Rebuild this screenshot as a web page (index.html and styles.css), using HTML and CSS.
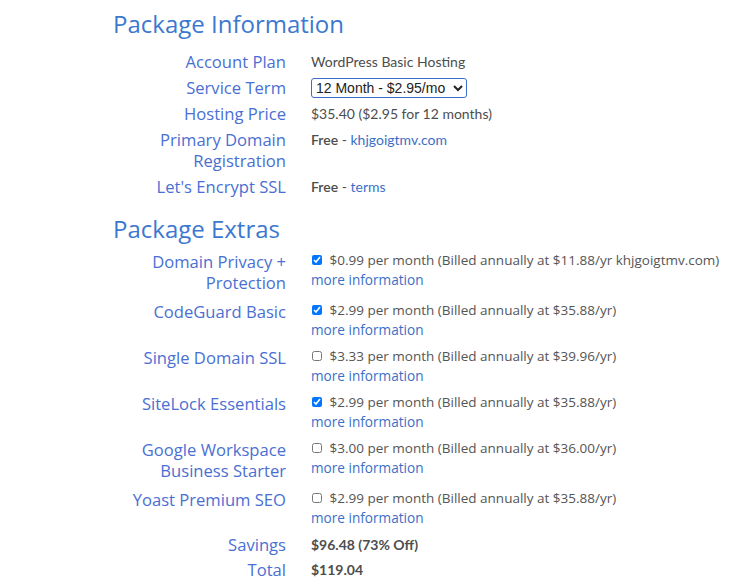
FILE: index.html
```html
<!DOCTYPE html>
<html lang="en">
<head>
  <meta charset="UTF-8">
  <title>Package Information</title>
  <link rel="stylesheet" href="styles.css">
</head>
<body>
  <div class="container">
    <h2>Package Information</h2>
    <div class="rows info">
      <div class="row">
        <div class="label">Account Plan</div>
        <div class="value">WordPress Basic Hosting</div>
      </div>
      <div class="row">
        <div class="label">Service Term</div>
        <div class="value">
          <select class="term">
            <option>12 Month - $2.95/mo</option>
            <option>24 Month - $2.95/mo</option>
            <option>36 Month - $2.95/mo</option>
          </select>
        </div>
      </div>
      <div class="row">
        <div class="label">Hosting Price</div>
        <div class="value">$35.40 ($2.95 for 12 months)</div>
      </div>
      <div class="row">
        <div class="label">Primary Domain Registration</div>
        <div class="value"><b>Free</b> - <a href="#">khjgoigtmv.com</a></div>
      </div>
      <div class="row">
        <div class="label">Let's Encrypt SSL</div>
        <div class="value"><b>Free</b> - <a href="#">terms</a></div>
      </div>
    </div>

    <h2>Package Extras</h2>
    <div class="rows extras">
      <div class="row">
        <div class="label">Domain Privacy + Protection</div>
        <div class="value">
          <label><input type="checkbox" checked> $0.99 per month (Billed annually at $11.88/yr khjgoigtmv.com)</label>
          <a href="#">more information</a>
        </div>
      </div>
      <div class="row">
        <div class="label">CodeGuard Basic</div>
        <div class="value">
          <label><input type="checkbox" checked> $2.99 per month (Billed annually at $35.88/yr)</label>
          <a href="#">more information</a>
        </div>
      </div>
      <div class="row">
        <div class="label">Single Domain SSL</div>
        <div class="value">
          <label><input type="checkbox"> $3.33 per month (Billed annually at $39.96/yr)</label>
          <a href="#">more information</a>
        </div>
      </div>
      <div class="row">
        <div class="label">SiteLock Essentials</div>
        <div class="value">
          <label><input type="checkbox" checked> $2.99 per month (Billed annually at $35.88/yr)</label>
          <a href="#">more information</a>
        </div>
      </div>
      <div class="row">
        <div class="label">Google Workspace Business Starter</div>
        <div class="value">
          <label><input type="checkbox"> $3.00 per month (Billed annually at $36.00/yr)</label>
          <a href="#">more information</a>
        </div>
      </div>
      <div class="row">
        <div class="label">Yoast Premium SEO</div>
        <div class="value">
          <label><input type="checkbox"> $2.99 per month (Billed annually at $35.88/yr)</label>
          <a href="#">more information</a>
        </div>
      </div>
    </div>

    <div class="rows totals">
      <div class="row">
        <div class="label">Savings</div>
        <div class="value"><b>$96.48 (73% Off)</b></div>
      </div>
      <div class="row">
        <div class="label">Total</div>
        <div class="value"><b>$119.04</b></div>
      </div>
    </div>
  </div>
</body>
</html>
```

FILE: styles.css
```css
* {
  box-sizing: border-box;
  margin: 0;
  padding: 0;
}

body {
  font-family: "Open Sans", sans-serif;
  background-color: #ffffff;
  color: #555555;
}

.container {
  padding: 8px 0 0 113px;
}

h2 {
  font-weight: normal;
  font-size: 24px;
  line-height: 32px;
  color: #3d78d0;
}

.rows {
  margin-top: 11px;
}

.row {
  display: flex;
  align-items: flex-start;
  gap: 25px;
}

.label {
  width: 173px;
  text-align: right;
  font-size: 16.6px;
  line-height: 21px;
  color: #4a6fd3;
}

.value {
  font-size: 13px;
}

.value a {
  color: #3b6fc7;
  text-decoration: none;
}

/* top section */
.info {
  margin-bottom: 16px;
}

.info .row {
  margin-bottom: 5px;
}

.info .value,
.totals .value {
  font-family: Lato, sans-serif;
  font-size: 14px;
  line-height: 21px;
  color: #4d4d4d;
}

.info b {
  font-weight: 600;
}

.term {
  font-family: Arial, sans-serif;
  font-size: 14px;
  height: 20px;
  width: 156px;
  border: 1px solid #3b6fc7;
  border-radius: 3px;
  color: #222222;
  background: #ffffff;
}

/* extras */
.extras {
  margin-top: 6px;
}

.extras .row {
  margin-bottom: 8px;
}

.extras .value {
  font-size: 13.5px;
  line-height: 19px;
}

.extras label {
  display: block;
}

.extras input {
  width: 10px;
  height: 10px;
  margin: 0 4px 0 1px;
  vertical-align: 0;
}

.extras a {
  display: block;
  font-size: 13.6px;
}

.totals {
  margin-top: -1px;
}

.totals .row {
  margin-bottom: 4px;
}

.totals b {
  font-weight: 700;
}
```
